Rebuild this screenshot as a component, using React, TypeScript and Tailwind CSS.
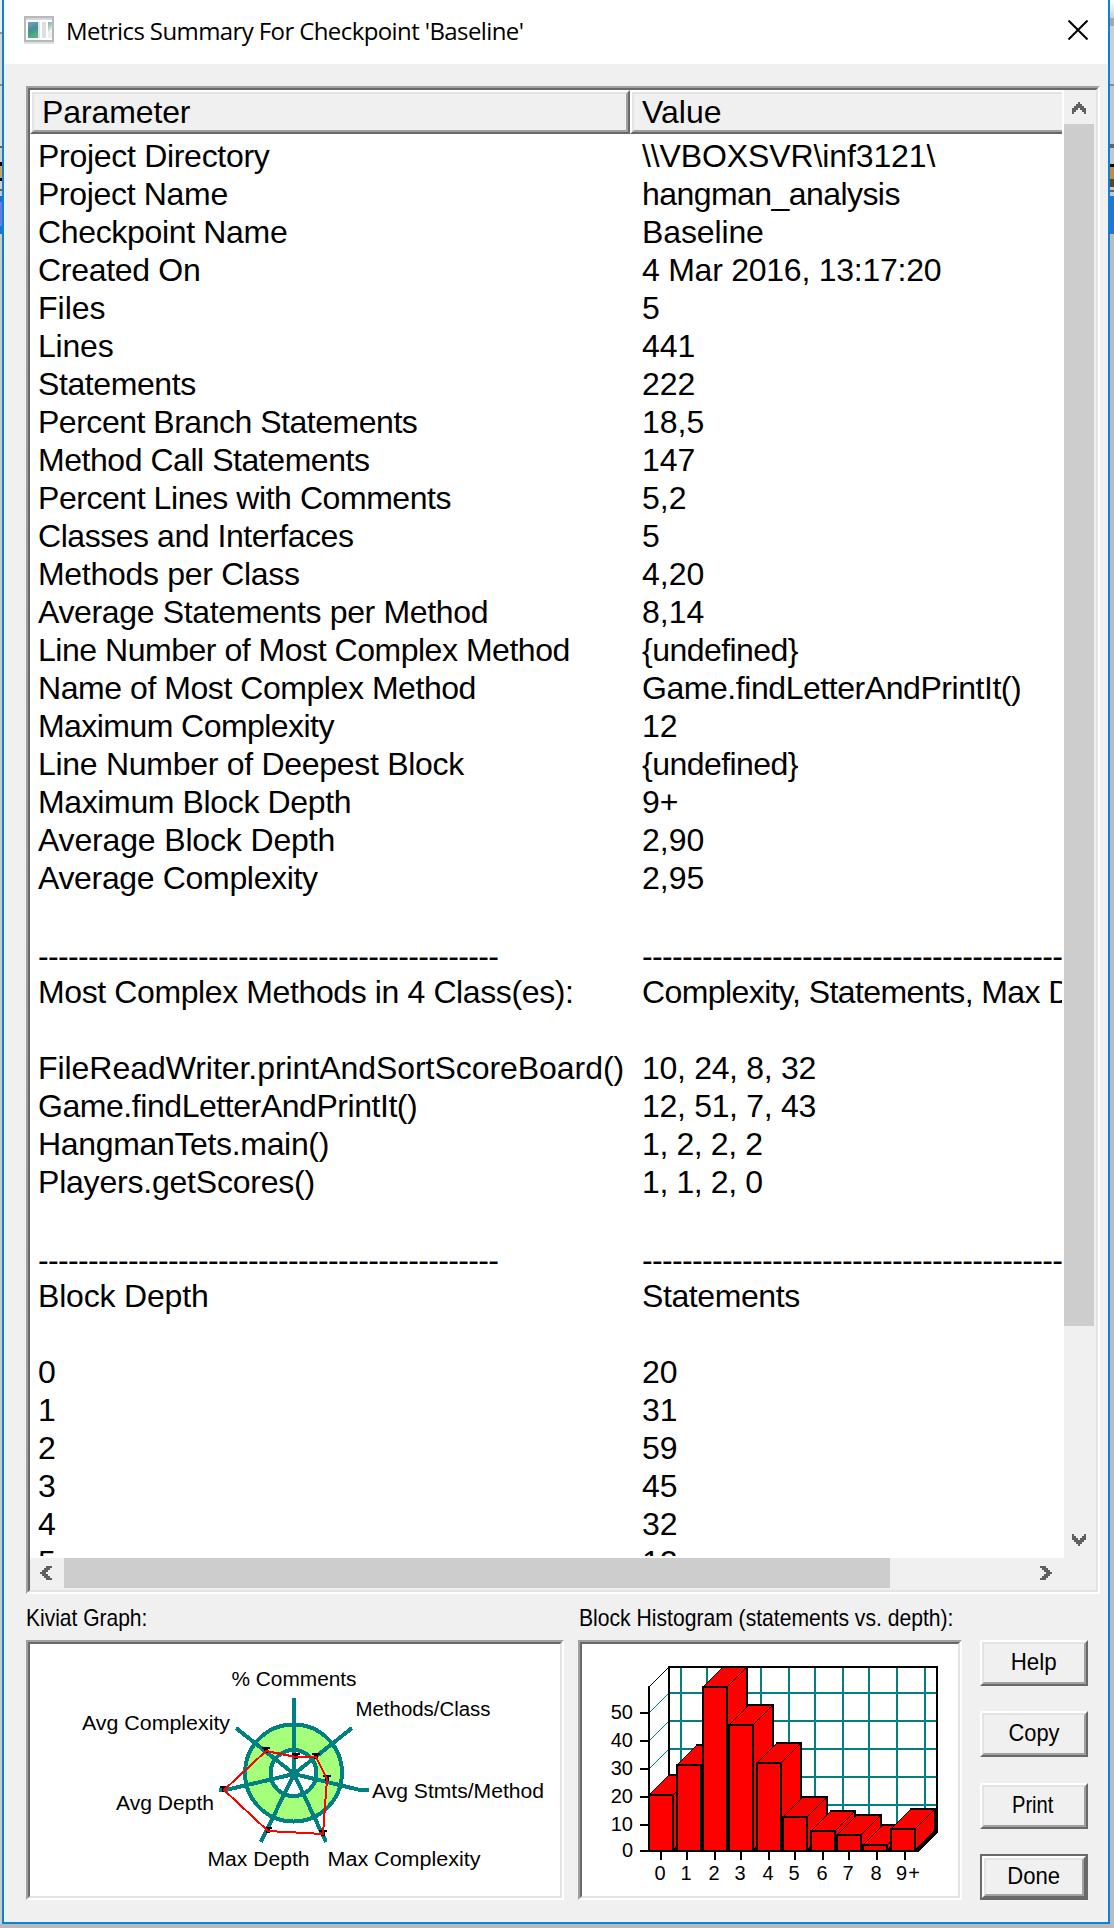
import React from "react";

type Cell = [text: string, adjust: number];

const DASHES: Cell = ["-".repeat(46), -30];
const BLANK: [Cell, Cell] = [["", 0], ["", 0]];

// Each cell holds its text and the total pixel adjustment spread over its letters.
const rows: [Cell, Cell][] = [
  [["Project Directory", -5], ["\\\\VBOXSVR\\inf3121\\", -2]],
  [["Project Name", -4], ["hangman_analysis", -9]],
  [["Checkpoint Name", -5], ["Baseline", -1]],
  [["Created On", -3], ["4 Mar 2016, 13:17:20", -5]],
  [["Files", 0], ["5", 0]],
  [["Lines", -1], ["441", 0]],
  [["Statements", -4], ["222", 0]],
  [["Percent Branch Statements", -12], ["18,5", 0]],
  [["Method Call Statements", -10], ["147", 0]],
  [["Percent Lines with Comments", -12], ["5,2", 0]],
  [["Classes and Interfaces", -10], ["5", 0]],
  [["Methods per Class", -5], ["4,20", 0]],
  [["Average Statements per Method", -10], ["8,14", 0]],
  [["Line Number of Most Complex Method", -16], ["{undefined}", -6]],
  [["Name of Most Complex Method", -12], ["Game.findLetterAndPrintIt()", -12]],
  [["Maximum Complexity", -10], ["12", 0]],
  [["Line Number of Deepest Block", -8], ["{undefined}", -6]],
  [["Maximum Block Depth", -7], ["9+", 0]],
  [["Average Block Depth", -3], ["2,90", 0]],
  [["Average Complexity", -6], ["2,95", 0]],
  BLANK,
  [DASHES, DASHES],
  [["Most Complex Methods in 4 Class(es):", -14], ["Complexity, Statements, Max D", -17]],
  BLANK,
  [["FileReadWriter.printAndSortScoreBoard()", -2], ["10, 24, 8, 32", -4]],
  [["Game.findLetterAndPrintIt()", -12], ["12, 51, 7, 43", -4]],
  [["HangmanTets.main()", -6], ["1, 2, 2, 2", -4]],
  [["Players.getScores()", -4], ["1, 1, 2, 0", -4]],
  BLANK,
  [DASHES, DASHES],
  [["Block Depth", -2], ["Statements", -4]],
  BLANK,
  [["0", 0], ["20", 0]],
  [["1", 0], ["31", 0]],
  [["2", 0], ["59", 0]],
  [["3", 0], ["45", 0]],
  [["4", 0], ["32", 0]],
  [["5", 0], ["12", 0]],
];

function Fitted({ cell }: { cell: Cell }) {
  const [text, adjust] = cell;
  return <span style={{ letterSpacing: text ? `${adjust / text.length}px` : undefined }}>{text}</span>;
}

function Sunken({ className, children }: { className: string; children: React.ReactNode }) {
  return (
    <div className={`border-2 border-t-[#a0a0a0] border-l-[#a0a0a0] border-r-white border-b-white ${className}`}>
      <div className="h-full w-full overflow-hidden border-2 border-t-[#696969] border-l-[#696969] border-r-[#e3e3e3] border-b-[#e3e3e3] bg-white">
        {children}
      </div>
    </div>
  );
}

function Chevron({ className }: { className: string }) {
  return (
    <svg className={className} width="14" height="12" viewBox="0 0 14 12" fill="#606060" shapeRendering="crispEdges">
      <path d="M6 0h2v2h2v2h2v2h2v6h-2v-2h-2v-2h-2v-2h-2v2h-2v2h-2v2h-2v-6h2v-2h2v-2h2z" />
    </svg>
  );
}

function PushButton({ label, scale, focused }: { label: string; scale: string; focused?: boolean }) {
  return (
    <button className={focused ? "block h-[46px] w-[108px] border-2 border-[#696969] bg-[#f0f0f0]" : "block h-[46px] w-[108px] bg-[#f0f0f0]"}>
      <div className="h-full border-2 border-t-white border-l-white border-r-[#696969] border-b-[#696969]">
        <div className="flex h-full items-center justify-center border-2 border-t-[#e3e3e3] border-l-[#e3e3e3] border-r-[#a0a0a0] border-b-[#a0a0a0] pb-[2px]">
          <span className={`text-[24px] leading-none ${scale}`}>{label}</span>
        </div>
      </div>
    </button>
  );
}

const TEAL = "#008080";

const kiviatLabels: [string, number, number, number][] = [
  ["% Comments", 231.5, 1686, 125],
  ["Methods/Class", 355.5, 1716, 135],
  ["Avg Complexity", 82, 1730, 148],
  ["Avg Stmts/Method", 372, 1798, 172],
  ["Avg Depth", 116, 1810, 98],
  ["Max Depth", 207.5, 1866, 102],
  ["Max Complexity", 327.5, 1866, 153],
];

const kiviatPoints: [number, number][] = [
  [266, 1751], [296, 1757], [316, 1757], [327, 1779], [323, 1834], [268, 1831], [224, 1790],
];

function Kiviat() {
  return (
    <svg width="530" height="252" viewBox="30 1644 530 252" className="block font-['Liberation_Sans']">
      <g shapeRendering="crispEdges" fill="none">
        <circle cx="293.5" cy="1773" r="48.5" fill="#a6ff7a" stroke={TEAL} strokeWidth="4" />
        <circle cx="293.5" cy="1773" r="23" fill="#fff" stroke={TEAL} strokeWidth="4" />
        <path
          d="M294 1774V1698M294 1774L352 1728M294 1774L360 1790H369M294 1774L326 1842M294 1774L261 1842M294 1774L228 1789.500H219M294 1774L236 1728"
          stroke={TEAL}
          strokeWidth="4"
        />
        {kiviatPoints.map(([x, y]) => (
          <path key={`${x}-${y}`} d={`M${x - 4} ${y - 4}h8v2h-2v4h-4v-4h-2z`} fill="#000" />
        ))}
        <polygon points={kiviatPoints.map((p) => p.join(",")).join(" ")} stroke="#f00" strokeWidth="2" />
      </g>
      {kiviatLabels.map(([t, x, y, w]) => (
        <text key={t} x={x} y={y} textLength={w} lengthAdjust="spacingAndGlyphs" fontSize="20">{t}</text>
      ))}
    </svg>
  );
}

const bars = [
  { x: 649, y: 1795, tick: 661, label: "0" },
  { x: 677, y: 1765, tick: 687, label: "1" },
  { x: 703, y: 1687, tick: 715, label: "2" },
  { x: 729, y: 1725, tick: 741, label: "3" },
  { x: 757, y: 1763, tick: 769, label: "4" },
  { x: 783, y: 1817, tick: 795, label: "5" },
  { x: 811, y: 1831, tick: 823, label: "6" },
  { x: 837, y: 1835, tick: 849, label: "7" },
  { x: 863, y: 1845, tick: 877, label: "8" },
  { x: 891, y: 1829, tick: 905, label: "9+" },
];
const gridRows = [1693, 1721, 1749, 1777, 1805];
const gridCols = [681, 707, 734, 761, 789, 815, 843, 869, 897, 925];
const yTicks: [string, number][] = [["50", 1713], ["40", 1741], ["30", 1769], ["20", 1797], ["10", 1825], ["0", 1851]];

function Histogram() {
  return (
    <svg width="376" height="252" viewBox="582 1644 376 252" className="block font-['Liberation_Sans']">
      <g shapeRendering="crispEdges" fill="none" strokeWidth="2">
        {gridRows.map((y) => <path key={y} d={`M649 ${y + 20}L669 ${y}`} stroke={TEAL} strokeWidth="1.4" />)}
        {gridRows.map((y) => <path key={`h${y}`} d={`M669 ${y}H937`} stroke={TEAL} />)}
        {gridCols.map((x) => <path key={x} d={`M${x} 1667V1831`} stroke={TEAL} />)}
        <path d="M669 1831V1667H937V1832" stroke="#000" />
        <path d="M649 1687L669 1667" stroke="#000" strokeWidth="1.4" />
        <path d="M649 1686V1851M640 1851H917" stroke="#000" />
        <path d="M917 1851L937 1831" stroke="#000" strokeWidth="3" />
        {bars.map(({ x, y }) => (
          <g key={x} stroke="#000" fill="#f00">
            <path d={`M${x} ${y}l20 -20h24V1831l-20 20z`} stroke="none" />
            <path d={`M${x} ${y}l20 -20M${x + 24} ${y}l20 -20`} strokeWidth="1.4" />
            <path d={`M${x + 19} ${y - 20}h26M${x + 44} ${y - 21}V1831`} />
            <path d={`M${x + 44} 1831l-20 20`} strokeWidth="2" />
            <rect x={x} y={y} width="24" height={1851 - y} />
          </g>
        ))}
        {yTicks.map(([t, y]) => <path key={t} d={`M640 ${y}H649`} stroke="#000" />)}
        {bars.map(({ tick }) => <path key={tick} d={`M${tick} 1851V1860`} stroke="#000" />)}
        <path d="M640 1851H918" stroke="#000" />
      </g>
      <g fontSize="20">
        {yTicks.map(([t, y]) => <text key={t} x="633" y={y + 6} textAnchor="end">{t}</text>)}
        {bars.map(({ tick, label }) =>
          label === "9+" ? (
            <text key={label} x="896" y="1879.5" textLength="24">{label}</text>
          ) : (
            <text key={label} x={tick - 1} y="1879.5" textAnchor="middle">{label}</text>
          )
        )}
      </g>
    </svg>
  );
}

function AppIcon() {
  return (
    <svg width="30" height="28" viewBox="0 0 30 28" shapeRendering="crispEdges">
      <defs>
        <linearGradient id="pane" x1="0" y1="0" x2="0.3" y2="1">
          <stop offset="0" stopColor="#7c9fcb" />
          <stop offset="0.55" stopColor="#418f95" />
          <stop offset="1" stopColor="#52b27c" />
        </linearGradient>
        <linearGradient id="side" x1="0" y1="0" x2="0.4" y2="1">
          <stop offset="0" stopColor="#7fa3cf" />
          <stop offset="0.6" stopColor="#b5d6bd" />
          <stop offset="1" stopColor="#f4f6f4" />
        </linearGradient>
      </defs>
      <rect width="30" height="28" fill="#dfe1e3" />
      <rect width="30" height="26" fill="#b5b9bd" />
      <rect x="2" y="2" width="26" height="2" fill="#d5d8da" />
      <rect x="2" y="4" width="26" height="20" fill="#fff" />
      <rect x="4" y="6" width="10" height="16" fill="url(#pane)" />
      <rect x="14" y="6" width="2" height="16" fill="#dde2e2" />
      <rect x="18" y="6" width="4" height="16" fill="#dedede" />
      <rect x="24" y="6" width="4" height="10" fill="url(#side)" />
      <rect x="24" y="16" width="4" height="6" fill="#eef0ee" />
    </svg>
  );
}

export default function App() {
  return (
    <div className="h-[1928px] w-[1114px] overflow-hidden bg-[#b9b9b9] font-['Liberation_Sans',sans-serif] text-black">
      <div className="flex h-[1924px]">
        <div className="flex w-[2px] flex-col bg-[#cbcbcb]">
          <div className="h-[32px] bg-[#ececec]" />
          <div className="h-[2px] bg-[#959595]" />
          <div className="h-[50px] bg-[#d6d6d6]" />
          <div className="h-[2px] bg-[#8a8a8a]" />
          <div className="h-[60px] bg-[#d9d9d9]" />
          <div className="h-[2px] bg-[#606060]" />
          <div className="h-[14px] bg-[#d0d0d0]" />
          <div className="h-[4px] bg-black" />
          <div className="h-[12px] bg-[#c9a25e]" />
          <div className="h-[3px] bg-black" />
          <div className="h-[8px] bg-[#d0d0d0]" />
          <div className="h-[2px] bg-[#606060]" />
          <div className="h-[5px] bg-[#c8c8c8]" />
          <div className="h-[6px] bg-[#1f70d6]" />
          <div className="h-[24px] bg-[#667ddd]" />
          <div className="h-[8px] bg-[#1f70d6]" />
        </div>

        <div className="flex w-[1108px] flex-col border-x-2 border-b-2 border-[#0883d9] bg-[#f0f0f0]">
          <header className="flex h-[64px] items-start bg-white pl-[20px]">
            <div className="pt-[16px]"><AppIcon /></div>
            <h1 className="ml-[12px] grow whitespace-pre pt-[14px] font-['Open_Sans'] text-[24px] leading-[33px] tracking-[-0.6px]">
              Metrics Summary For Checkpoint 'Baseline'
            </h1>
            <svg className="mt-[20px] mr-[20px]" width="20" height="20" viewBox="0 0 20 20" stroke="#000" strokeWidth="2">
              <path d="M0.500 0.500l19 19M19.500 0.500l-19 19" />
            </svg>
          </header>

          <main className="pl-[22px] pt-[22px]">
            <Sunken className="h-[1508px] w-[1074px]">
              <div className="flex h-[1468px]">
                <div className="w-[1034px] text-[32px]">
                  <div className="flex h-[44px] w-[1032px] leading-[36px]">
                    <div className="w-[600px] border-2 border-t-white border-l-white border-r-[#696969] border-b-[#696969]">
                      <div className="h-full border-2 border-t-[#e3e3e3] border-l-[#e3e3e3] border-r-[#a0a0a0] border-b-[#a0a0a0] bg-[#f0f0f0] pl-[8px]">
                        <Fitted cell={["Parameter", -1]} />
                      </div>
                    </div>
                    <div className="w-[432px] border-y-2 border-l-2 border-t-white border-l-white border-b-[#696969]">
                      <div className="h-full border-y-2 border-l-2 border-t-[#e3e3e3] border-l-[#e3e3e3] border-b-[#a0a0a0] bg-[#f0f0f0] pl-[8px]">
                        Value
                      </div>
                    </div>
                  </div>
                  <div className="h-[1422px] w-[1032px] overflow-hidden pl-[8px] pt-[3px] leading-[38px]">
                    {rows.map(([a, b], i) => (
                      <div key={i} className={a === DASHES ? "flex h-[38px] whitespace-pre pt-[2px]" : "flex h-[38px] whitespace-pre"}>
                        <div className="w-[604px] shrink-0"><Fitted cell={a} /></div>
                        <div className="shrink-0"><Fitted cell={b} /></div>
                      </div>
                    ))}
                  </div>
                </div>
                <div className="flex w-[32px] flex-col bg-[#f0f0f0]">
                  <div className="h-[34px] pl-[8px] pt-[12px]"><Chevron className="block" /></div>
                  <div className="h-[1202px] w-[30px] bg-[#cdcdcd]" />
                  <div className="pl-[8px] pt-[208px]"><Chevron className="block rotate-180" /></div>
                </div>
              </div>
              <div className="flex h-[32px] bg-[#f0f0f0]">
                <div className="w-[34px] pl-[9px] pt-[9px]"><Chevron className="block -rotate-90" /></div>
                <div className="h-[30px] w-[826px] bg-[#cdcdcd]" />
                <div className="pl-[149px] pt-[9px]"><Chevron className="block rotate-90" /></div>
              </div>
            </Sunken>

            <div className="flex">
              <section className="w-[538px]">
                <h2 className="h-[46px] w-max origin-left scale-x-[0.875] whitespace-pre text-[24px] leading-[48px]">Kiviat Graph:</h2>
                <Sunken className="h-[260px] w-[538px]"><Kiviat /></Sunken>
              </section>
              <section className="ml-[14px] w-[384px]">
                <h2 className="ml-px h-[46px] w-max origin-left scale-x-[0.88] whitespace-pre text-[24px] leading-[48px]">Block Histogram (statements vs. depth):</h2>
                <Sunken className="h-[260px] w-[384px]"><Histogram /></Sunken>
              </section>
              <div className="ml-[18px] flex h-[306px] flex-col justify-between pt-[46px]">
                <PushButton label="Help" scale="scale-x-[0.93]" />
                <PushButton label="Copy" scale="scale-x-[0.91]" />
                <PushButton label="Print" scale="scale-x-[0.84] -translate-x-px" />
                <PushButton label="Done" scale="scale-x-[0.92]" focused />
              </div>
            </div>
          </main>
        </div>

        <div className="flex w-[4px] flex-col bg-[#bcbaba]">
          <div className="h-[18px] bg-linear-to-b from-white to-[#cfcfcf]" />
          <div className="h-[8px] bg-[#a8a4b4]" />
          <div className="h-[58px] bg-[#cfcfcf]" />
          <div className="h-[2px] bg-[#8a8a8a]" />
          <div className="h-[58px] bg-[#c6c6c6]" />
          <div className="h-[4px] bg-[#646464]" />
          <div className="h-[16px] bg-[#c6c6c6]" />
          <div className="h-[3px] bg-black" />
          <div className="h-[12px] bg-[#c98a3c]" />
          <div className="h-[8px] bg-[#4d4936]" />
          <div className="h-[3px] bg-[#c6c6c6]" />
          <div className="h-[2px] bg-[#606060]" />
          <div className="h-[4px] bg-[#c6c6c6]" />
          <div className="h-[38px] bg-[#2274d6]" />
        </div>
      </div>
    </div>
  );
}
